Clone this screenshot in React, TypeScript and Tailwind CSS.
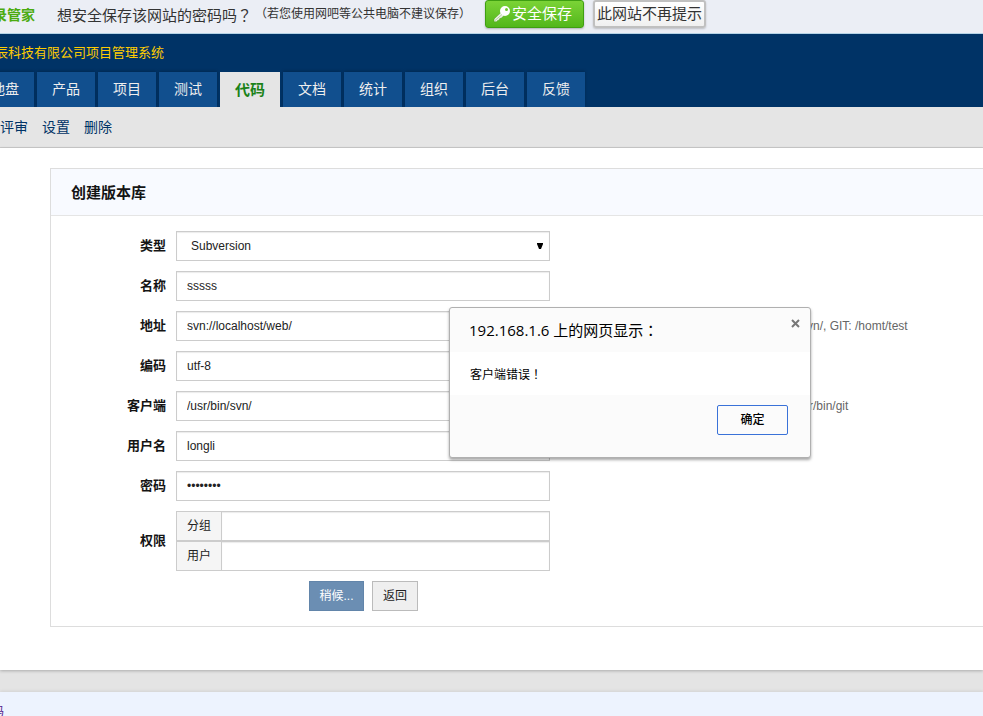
import { useState } from 'react';
import type { ReactNode } from 'react';

const TABS = ['地盘', '产品', '项目', '测试', '代码', '文档', '统计', '组织', '后台', '反馈'];
const ACTIVE_TAB = '代码';
const SUB_LINKS = ['评审', '设置', '删除'];

const CONTROL =
  'h-[30px] border border-[#ccc] bg-white px-2.5 text-xs text-[#222] shadow-[inset_0_1px_1px_rgba(0,0,0,0.08)] outline-none';

/* Full-width punctuation set in the middle of its box */
function Punct({ children }: { children: string }) {
  return <span className="font-['Noto_Sans_CJK_TC',sans-serif]">{children}</span>;
}

function KeyIcon() {
  return (
    <svg width="18" height="18" viewBox="0 0 18 18" aria-hidden="true">
      <path
        d="M8 7.500 1 14v2.800h2.600l1-1.300 1.400-.3.800-1.700 1.700-.4 2.500-2.600z"
        fill="#eef3e8"
        stroke="#4a9a1a"
        strokeWidth="0.5"
      />
      <path
        d="M12 1a5 5 0 1 0 0 10a5 5 0 0 0 0-10zm1.500 2a1.500 1.500 0 1 1 0 3a1.500 1.500 0 0 1 0-3z"
        fill="#fff"
        fillRule="evenodd"
      />
      <path d="M2 15.500 9 9.500" stroke="#a9c596" strokeWidth="0.8" />
    </svg>
  );
}

function PasswordBar() {
  return (
    <div className="flex h-[34px] items-start border-b border-[#b5d3e6] bg-[#ebeef5] whitespace-nowrap text-[#333]">
      <strong className="-ml-[7px] text-sm leading-[30px] text-[#4bab10]">录管家</strong>
      <span className="ml-[22px] text-[15px] leading-[30px]">
        想安全保存该网站的密码吗<Punct>？</Punct>
      </span>
      <span className="ml-[3px] text-xs leading-7">（若您使用网吧等公共电脑不建议保存）</span>
      <button
        type="button"
        className="ml-[14px] flex h-7 w-[99px] items-center gap-px rounded-[3px] border border-[#3f9f12] bg-linear-to-b from-[#7bd336] to-[#52b71a] pl-[7px] text-[15px] text-white shadow-[0_1px_2px_rgba(0,0,0,0.25)]"
      >
        <KeyIcon />
        安全保存
      </button>
      <button
        type="button"
        className="ml-[9px] h-7 w-[113px] rounded-[3px] border-2 border-[#c0c0c0] bg-linear-to-b from-white to-[#f0f0f0] text-[15px] leading-6 shadow-[0_1px_2px_rgba(0,0,0,0.2)]"
      >
        此网站不再提示
      </button>
    </div>
  );
}

function Header() {
  return (
    <header className="bg-[#036] whitespace-nowrap">
      <h1 className="-ml-[5px] h-[38px] text-[13px] leading-[38px] text-[#fc0]">
        辰科技有限公司项目管理系统
      </h1>
      <nav className="-ml-6 flex gap-[3px]">
        {TABS.map((tab) => (
          <a
            key={tab}
            href="#"
            className={
              tab === ACTIVE_TAB
                ? 'h-[35px] bg-[#e5e5e5] px-[15px] text-[15px] leading-[35px] font-bold text-[#1a8218]'
                : 'h-[35px] bg-[#114f8e] px-[15px] text-sm leading-[35px] text-[#eee] shadow-[0_-1px_3px_rgba(0,0,0,0.2)]'
            }
          >
            {tab}
          </a>
        ))}
      </nav>
    </header>
  );
}

type RowProps = { id: string; label: string; hint?: ReactNode; children: ReactNode };

function Row({ id, label, hint, children }: RowProps) {
  return (
    <div className="flex items-center">
      <label htmlFor={id} className="w-[115px] shrink-0 text-right text-[13px] leading-5 font-bold text-[#141414]">
        {label}
      </label>
      <div className="ml-2.5 w-[374px] shrink-0">{children}</div>
      {hint}
    </div>
  );
}

type TextRowProps = { id: string; label: string; value: string; type?: string; hint?: ReactNode };

function TextRow({ id, label, value, type = 'text', hint }: TextRowProps) {
  return (
    <Row id={id} label={label} hint={hint}>
      <input id={id} type={type} defaultValue={value} className={`${CONTROL} w-full`} />
    </Row>
  );
}

function AclField({ id, label }: { id: string; label: string }) {
  return (
    <div className="flex">
      <label
        htmlFor={id}
        className="h-[30px] w-[46px] border border-[#ccc] bg-[#f5f5f5] text-center text-xs leading-7 text-[#222]"
      >
        {label}
      </label>
      <input id={id} type="text" className={`${CONTROL} min-w-0 flex-1 border-l-0`} />
    </div>
  );
}

function RepoForm() {
  return (
    <section className="mt-5 ml-[50px] border border-r-0 border-[#ddd]">
      <h2 className="h-[47px] border-b border-[#e5e5e5] bg-[#f8faff] pl-5 text-[15px] leading-[47px] font-bold text-[#141414]">
        创建版本库
      </h2>
      <form className="flex flex-col gap-2.5 py-[15px]" onSubmit={(e) => e.preventDefault()}>
        <Row id="scm" label="类型">
          <div className="relative">
            <select id="scm" className={`${CONTROL} w-full appearance-none pl-[14px]`}>
              <option>Subversion</option>
              <option>Git</option>
            </select>
            <svg
              className="pointer-events-none absolute top-3 right-[7px]"
              width="6"
              height="6"
              viewBox="0 0 6 6"
              aria-hidden="true"
            >
              <path d="M0 0h6v1L4 6H2L0 1z" fill="#000" />
            </svg>
          </div>
        </Row>
        <TextRow id="name" label="名称" value="sssss" />
        <TextRow
          id="path"
          label="地址"
          value="svn://localhost/web/"
          hint={<span className="ml-[251px] text-xs whitespace-nowrap text-[#666]">svn/, GIT: /homt/test</span>}
        />
        <TextRow id="encoding" label="编码" value="utf-8" />
        <TextRow
          id="client"
          label="客户端"
          value="/usr/bin/svn/"
          hint={<span className="ml-[243px] text-xs whitespace-nowrap text-[#666]">/usr/bin/git</span>}
        />
        <TextRow id="account" label="用户名" value="longli" />
        <TextRow id="password" label="密码" value="12345678" type="password" />
        <Row id="groups" label="权限">
          <AclField id="groups" label="分组" />
          <AclField id="users" label="用户" />
        </Row>
        <div className="ml-[258px] flex gap-2">
          <button type="submit" className="h-[30px] w-[55px] border border-[#6285aa] bg-[#6b8eb3] text-xs text-white">
            稍候...
          </button>
          <button type="button" className="h-[30px] w-[46px] border border-[#bbb] bg-[#efefef] text-xs text-[#222]">
            返回
          </button>
        </div>
      </form>
    </section>
  );
}

function AlertDialog({ onClose }: { onClose: () => void }) {
  return (
    <div
      role="alertdialog"
      aria-labelledby="alert-title"
      aria-describedby="alert-text"
      className="absolute top-[307px] left-[449px] w-[362px] rounded-[3px] border border-[#b0b0b0] bg-[#fbfbfb] text-black shadow-[0_2px_3px_rgba(0,0,0,0.35)]"
    >
      <div className="flex h-11 justify-between pr-2.5 pl-[19px]">
        <h3
          id="alert-title"
          className="font-['Open_Sans','Noto_Sans_CJK_SC',sans-serif] text-[15px] leading-[44px]"
        >
          192.168.1.6 上的网页显示<Punct>：</Punct>
        </h3>
        <button type="button" aria-label="关闭" onClick={onClose} className="mt-2.5 h-2.5">
          <svg width="9" height="9" viewBox="0 0 9 9" aria-hidden="true">
            <path d="M1 1l7 7M8 1l-7 7" stroke="#777" strokeWidth="2" />
          </svg>
        </button>
      </div>
      <p id="alert-text" className="h-[43px] bg-white pl-5 text-xs leading-[44px]">
        客户端错误<Punct>！</Punct>
      </p>
      <div className="flex h-[62px] justify-end pt-2.5 pr-[22px]">
        <button
          type="button"
          onClick={onClose}
          className="h-[30px] w-[71px] rounded-[2px] border border-[#3a72d8] bg-[#fbfbfb] text-xs font-medium"
        >
          确定
        </button>
      </div>
    </div>
  );
}

export default function App() {
  const [alertOpen, setAlertOpen] = useState(true);

  return (
    <div className="relative flex min-h-screen flex-col overflow-hidden bg-[#e4e4e4] font-['Liberation_Sans','Noto_Sans_CJK_SC',sans-serif]">
      <PasswordBar />
      <Header />
      <nav className="flex h-[41px] gap-[14px] border-b border-[#ccc] bg-[#e5e5e5] text-sm leading-10 text-[#036]">
        {SUB_LINKS.map((link) => (
          <a key={link} href="#">
            {link}
          </a>
        ))}
      </nav>
      <main className="bg-white pb-[43px] shadow-[0_1px_3px_rgba(0,0,0,0.25)]">
        <RepoForm />
      </main>
      <footer className="mt-[22px] h-6 flex-1 overflow-hidden bg-[#edf3fe] pt-2.5 text-xs leading-5 shadow-[0_-1px_3px_rgba(0,0,0,0.08)]">
        <a href="#" className="-ml-2 text-[#551a8b]">
          码
        </a>
      </footer>
      {alertOpen && <AlertDialog onClose={() => setAlertOpen(false)} />}
    </div>
  );
}
